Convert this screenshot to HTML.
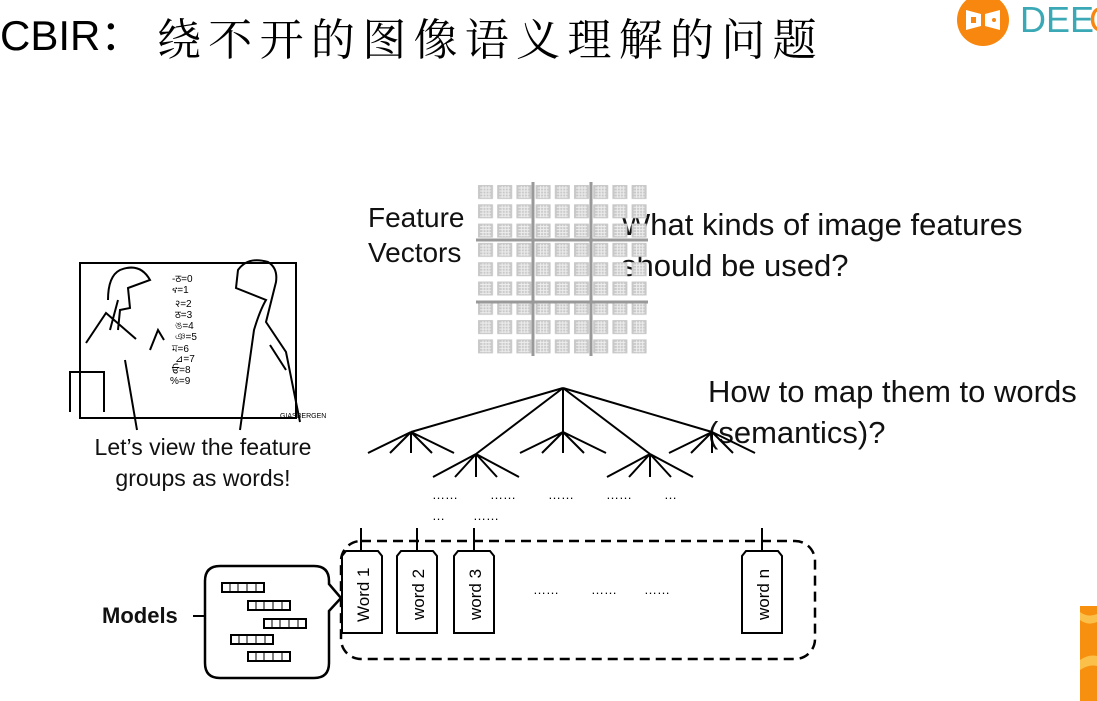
<!DOCTYPE html>
<html><head><meta charset="utf-8"><style>
html,body{margin:0;padding:0;background:#fff;width:1097px;height:701px;overflow:hidden;position:relative;font-family:"Liberation Sans",sans-serif}
.t{position:absolute;white-space:nowrap;color:#111}
</style></head><body>
<div class="t" style="left:0;top:8px;font-family:'Liberation Sans','Noto Sans CJK SC',sans-serif;font-size:42px;line-height:56px;color:#000">CBIR：</div>
<div class="t" style="left:157px;top:8px;font-family:'Noto Serif CJK SC',serif;font-size:44px;letter-spacing:7.3px;line-height:56px;color:#000">绕不开的图像语义理解的问题</div>
<svg style="position:absolute;left:955px;top:0" width="142" height="48">
<circle cx="28" cy="20" r="26" fill="#f7870f"/>
<path d="M11 10 L26 14 L26 26 L11 30 Z M30 14 L45 10 L45 30 L30 26 Z" fill="#fff"/>
<rect x="16" y="17" width="5" height="6" fill="#f7870f"/><circle cx="39" cy="20" r="2" fill="#f7870f"/>
<text x="65" y="32" font-family="Liberation Sans" font-size="36" fill="#3aa9b5">DEE</text>
<text x="134" y="32" font-family="Liberation Sans" font-size="36" fill="#f7870f">C</text>
</svg>
<div class="t" style="left:368px;top:200px;font-size:28px;line-height:35px">Feature<br>Vectors</div>
<div class="t" style="left:621px;top:204px;font-size:31px;line-height:41px">What kinds of image features<br>should be used?</div>
<div class="t" style="left:708px;top:371px;font-size:31px;line-height:41px">How to map them to words<br>(semantics)?</div>
<div class="t" style="left:70px;top:432px;width:266px;text-align:center;font-size:23px;line-height:31px">Let’s view the feature<br>groups as words!</div>
<div class="t" style="left:102px;top:603px;font-size:22px;font-weight:bold">Models</div>
<svg style="position:absolute;left:0;top:0" width="1097" height="701">
<defs>
<pattern id="cell" x="476" y="182" width="19.2" height="19.3" patternUnits="userSpaceOnUse">
<rect x="2" y="3" width="15" height="14" fill="#c8c8c8"/>
<path d="M4 6h11M4 9h11M4 12h11M4 15h11M7 4v12M10 4v12M13 4v12" stroke="#eee" stroke-width="1"/>
</pattern>
</defs>
<rect x="476" y="182" width="172" height="174" fill="url(#cell)"/>
<path d="M533 182v174M591 182v174M476 240h172M476 302h172" stroke="#999" stroke-width="3"/>
<g stroke="#000" stroke-width="2" fill="none">
<path d="M563 388L411 432M563 388L476 454M563 388V432M563 388L650 454M563 388L712 432"/>
<path d="M411 432l-43 21M411 432l-21 21M411 432v21M411 432l21 21M411 432l43 21"/>
<path d="M563 432l-43 21M563 432l-21 21M563 432v21M563 432l21 21M563 432l43 21"/>
<path d="M712 432l-43 21M712 432l-21 21M712 432v21M712 432l21 21M712 432l43 21"/>
<path d="M476 454l-43 23M476 454l-21 23M476 454v23M476 454l21 23M476 454l43 23"/>
<path d="M650 454l-43 23M650 454l-21 23M650 454v23M650 454l21 23M650 454l43 23"/>
</g>
<g font-family="Liberation Sans" font-size="13" fill="#000">
<text x="432" y="499">……</text><text x="490" y="499">……</text><text x="548" y="499">……</text><text x="606" y="499">……</text><text x="664" y="499">…</text>
<text x="432" y="520">…</text><text x="473" y="520">……</text>
<text x="533" y="594">……</text><text x="591" y="594">……</text><text x="644" y="594">……</text>
</g>
<rect x="341" y="541" width="474" height="118" rx="20" fill="none" stroke="#000" stroke-width="2.5" stroke-dasharray="10,6"/>
<g stroke="#000" stroke-width="2" fill="#fff">
<path d="M361 528v23M417 528v23M474 528v23M762 528v23"/>
<path d="M342 633V556l4-5h32l4 5v77Z"/>
<path d="M397 633V556l4-5h32l4 5v77Z"/>
<path d="M454 633V556l4-5h32l4 5v77Z"/>
<path d="M742 633V556l4-5h32l4 5v77Z"/>
</g>
<g font-family="Liberation Sans" font-size="17" fill="#000">
<text transform="translate(369 622) rotate(-90)">Word  1</text>
<text transform="translate(424 620) rotate(-90)">word  2</text>
<text transform="translate(481 620) rotate(-90)">word  3</text>
<text transform="translate(769 620) rotate(-90)">word  n</text>
</g>
<path d="M193 616h39" stroke="#000" stroke-width="2"/>
<path d="M230 566h84q15 0 15 15v3l12 14-12 13v52q0 15-15 15h-94q-15 0-15-15v-82q0-15 15-15Z" fill="#fff" stroke="#000" stroke-width="2.5"/>
<g fill="#fff" stroke="#000" stroke-width="2">
<rect x="222" y="583" width="42" height="9"/><rect x="248" y="601" width="42" height="9"/>
<rect x="264" y="619" width="42" height="9"/><rect x="231" y="635" width="42" height="9"/>
<rect x="248" y="652" width="42" height="9"/>
</g>
<g stroke="#000" stroke-width="1" fill="none">
<path d="M230 583v9M238 583v9M247 583v9M256 583v9M256 601v9M264 601v9M273 601v9M282 601v9M272 619v9M280 619v9M289 619v9M298 619v9M239 635v9M247 635v9M256 635v9M265 635v9M256 652v9M264 652v9M273 652v9M282 652v9"/>
</g>
<g stroke="#000" stroke-width="2" fill="none">
<rect x="80" y="263" width="216" height="155" fill="#fff"/>
<path d="M70 412V372h34v40M86 343l20-30 30 26M108 300q0-24 12-30 20-8 30 10l-22 8 2 20 -10 2 -2 20M118 300l-8 30M125 360l12 70M150 350l8 -20 6 10"/>
<path d="M240 430l14-100q6-20 12-30l-30-12 2-18q10-14 30-8 10 6 8 20l-10 40 20 30 14 70M270 345l16 25"/>
</g>
<g font-family="Liberation Sans" font-size="10" fill="#000">
<text x="172" y="282">-ठ=0</text><text x="172" y="293">ና=1</text><text x="175" y="307">२=2</text><text x="175" y="318">ठ=3</text><text x="175" y="329">ঙ=4</text><text x="175" y="340">ঞ=5</text><text x="172" y="352">ম=6</text><text x="175" y="362">⊿=7</text><text x="172" y="373">ਓ=8</text><text x="170" y="384">%=9</text>
<text x="280" y="418" font-size="7">GIASBERGEN</text>
</g>
<path d="M1080 606h17v95h-17Z" fill="#f7900f"/>
<path d="M1080 612q8 6 17 2v8q-9 4-17-2Z M1080 660q9 -6 17-4v10q-8-2-17 4Z" fill="#fbc04a"/>
</svg>
</body></html>
